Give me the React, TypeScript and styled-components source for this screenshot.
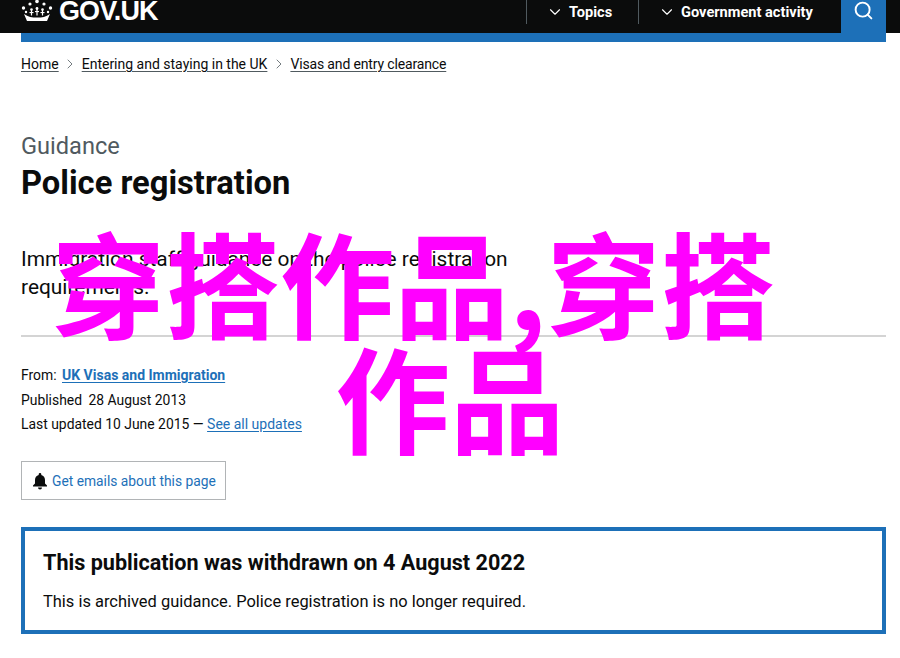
import React from "react";
import styled, { createGlobalStyle } from "styled-components";
import { ChevronDown, ChevronRight, Search } from "lucide-react";

const Global = createGlobalStyle`
  html, body { margin: 0; padding: 0; background: #fff; }
  body { width: 900px; height: 658px; overflow: hidden; font-family: Roboto, "Noto Sans", sans-serif; color: #0b0c0c; }
`;
const Page = styled.div`position: relative; width: 900px; height: 658px; overflow: hidden;`;
const Header = styled.header`
  height: 33px; background: #0b0c0c; display: flex; padding: 0 14px 0 21px; box-sizing: border-box;
`;
const Logo = styled.a`
  display: flex; align-items: center; gap: 6px; height: 22px; color: #fff;
  font: 700 27px/22px "Liberation Sans", sans-serif; letter-spacing: -0.9px;
`;
const Nav = styled.nav`display: flex; margin-left: auto;`;
const NavItem = styled.div<{ $w: number }>`
  width: ${p => p.$w}px; height: 24px; box-sizing: border-box; border-left: 1px solid #505a5f;
  display: flex; align-items: center; gap: 5px; padding-left: 19px; color: #fff;
  font: 700 14.6px/22px Roboto, sans-serif;
`;
const SearchBtn = styled.div`
  width: 45px; height: 33px; background: #1d70b8; color: #fff; display: flex; align-items: flex-start; justify-content: center;
`;
const Rule = styled.div`height: 9px; margin: 0 14px 0 21px; background: #1d70b8;`;
const Main = styled.main`padding: 0 14px 0 21px;`;
const Crumbs = styled.div`display: flex; align-items: center; margin-top: 12px; height: 20px; font-size: 14px; color: #0b0c0c;`;
const Crumb = styled.a<{ $tight?: boolean }>`
  color: #0b0c0c; text-decoration: underline; text-underline-offset: 2px; text-decoration-color: #505a5f;
  letter-spacing: ${p => (p.$tight ? "-0.15px" : "0")};
`;
const Sep = styled.span`display: flex; width: 23px; justify-content: center; color: #505a5f;`;
const Caption = styled.div`margin-top: 56px; font-size: 23.6px; line-height: 32px; color: #505a5f;`;
const Title = styled.h1`margin: 2px 0 0; font-size: 32.7px; line-height: 38px; font-weight: 700;`;
const Lead = styled.p`margin: 43px 0 0; font-size: 20.9px; line-height: 28px; width: 510px;`;
const Divider = styled.hr`margin: 34px 0 0; border: 0; height: 2px; background: #d4d4d4;`;
const Meta = styled.div`margin-top: 26px; font-size: 13.9px; line-height: 24.5px;`;
const MetaRow = styled.div`display: block;`;
const DateValue = styled.span`margin-left: 3px;`;
const StrongLink = styled.a`color: #1d70b8; font-size: 14px; font-weight: 700; text-decoration: underline; text-underline-offset: 2px; margin-left: 2px;`;
const PlainLink = styled.a`color: #1d70b8; font-size: 14px; text-decoration: underline; text-underline-offset: 2px;`;
const EmailBox = styled.div`
  margin-top: 24.5px; width: 205px; height: 39px; box-sizing: border-box; border: 1px solid #b1b4b6;
  display: flex; align-items: center; gap: 4px; padding-left: 10px; font-size: 13.8px; color: #1d70b8; white-space: nowrap;
`;
const Notice = styled.section`
  margin-top: 27px; width: 865px; height: 107px; box-sizing: border-box; border: 4px solid #1d70b8; padding: 18px 18px;
`;
const NoticeTitle = styled.h2`margin: 0; font-size: 21.6px; line-height: 28px; font-weight: 700;`;
const NoticeText = styled.p`margin: 13px 0 0; font-size: 16.45px; line-height: 24px;`;
const Overlay = styled.div`
  position: absolute; left: 0; top: 223px; width: 900px; color: #ff00ff;
  font: 700 114.5px/114.5px "Noto Sans CJK SC", sans-serif;
`;
const Line1 = styled.div`margin-left: 51px; white-space: nowrap;`;
const Line2 = styled.div`text-align: center; white-space: nowrap;`;

const Crown = () => (
  <svg width="32" height="22" viewBox="0 0 32 22" fill="#fff" aria-hidden="true">
    <path d="M3 14 L6 21 H26 L29 14 C25 17 21 17.500 16 17.500 C11 17.500 7 17 3 14Z" />
    <circle cx="16" cy="1.500" r="1.800" /><circle cx="9" cy="4" r="1.600" /><circle cx="23" cy="4" r="1.600" />
    <circle cx="2.500" cy="8" r="1.700" /><circle cx="29.500" cy="8" r="1.700" />
    <circle cx="10.500" cy="9.500" r="1.300" /><circle cx="21.500" cy="9.500" r="1.300" /><circle cx="16" cy="8.500" r="1.400" />
    <circle cx="5" cy="12" r="1.200" /><circle cx="27" cy="12" r="1.200" />
    <rect x="9.900" y="9.500" width="1.200" height="6" /><rect x="15.400" y="8.500" width="1.200" height="7" /><rect x="20.900" y="9.500" width="1.200" height="6" />
    <rect x="14" y="11" width="4" height="1.100" /><rect x="8.500" y="12" width="4" height="1.100" /><rect x="19.500" y="12" width="4" height="1.100" />
  </svg>
);
const Bell = () => (
  <svg width="16" height="18" viewBox="0 0 16 18" fill="#0b0c0c" aria-hidden="true">
    <path d="M8 1a1.300 1.300 0 0 1 1.300 1.300v.6C11.600 3.500 13 5.400 13 8v3.500l2 2V14.500H1V13.500l2-2V8c0-2.600 1.400-4.500 3.700-5.100v-.6A1.300 1.300 0 0 1 8 1Z" />
    <path d="M6 15.500h4a2 2 0 0 1-4 0Z" />
  </svg>
);

export default function App() {
  return (
    <Page>
      <Global />
      <Header>
        <Logo><Crown />GOV.UK</Logo>
        <Nav>
          <NavItem $w={112}><ChevronDown size={18} strokeWidth={1.5} />Topics</NavItem>
          <NavItem $w={203}><ChevronDown size={18} strokeWidth={1.5} />Government activity</NavItem>
        </Nav>
        <SearchBtn><Search size={21} strokeWidth={2.2} /></SearchBtn>
      </Header>
      <Rule />
      <Main>
        <Crumbs>
          <Crumb>Home</Crumb>
          <Sep><ChevronRight size={16} strokeWidth={1.2} /></Sep>
          <Crumb>Entering and staying in the UK</Crumb>
          <Sep><ChevronRight size={16} strokeWidth={1.2} /></Sep>
          <Crumb $tight>Visas and entry clearance</Crumb>
        </Crumbs>
        <Caption>Guidance</Caption>
        <Title>Police registration</Title>
        <Lead>Immigration staff guidance on the police registration requirements.</Lead>
        <Divider />
        <Meta>
          <MetaRow>From: <StrongLink>UK Visas and Immigration</StrongLink></MetaRow>
          <MetaRow>Published <DateValue>28 August 2013</DateValue></MetaRow>
          <MetaRow>Last updated 10 June 2015 — <PlainLink>See all updates</PlainLink></MetaRow>
        </Meta>
        <EmailBox><Bell />Get emails about this page</EmailBox>
        <Notice>
          <NoticeTitle>This publication was withdrawn on 4 August 2022</NoticeTitle>
          <NoticeText>This is archived guidance. Police registration is no longer required.</NoticeText>
        </Notice>
      </Main>
      <Overlay>
        <Line1>穿搭作品,穿搭</Line1>
        <Line2>作品</Line2>
      </Overlay>
    </Page>
  );
}
